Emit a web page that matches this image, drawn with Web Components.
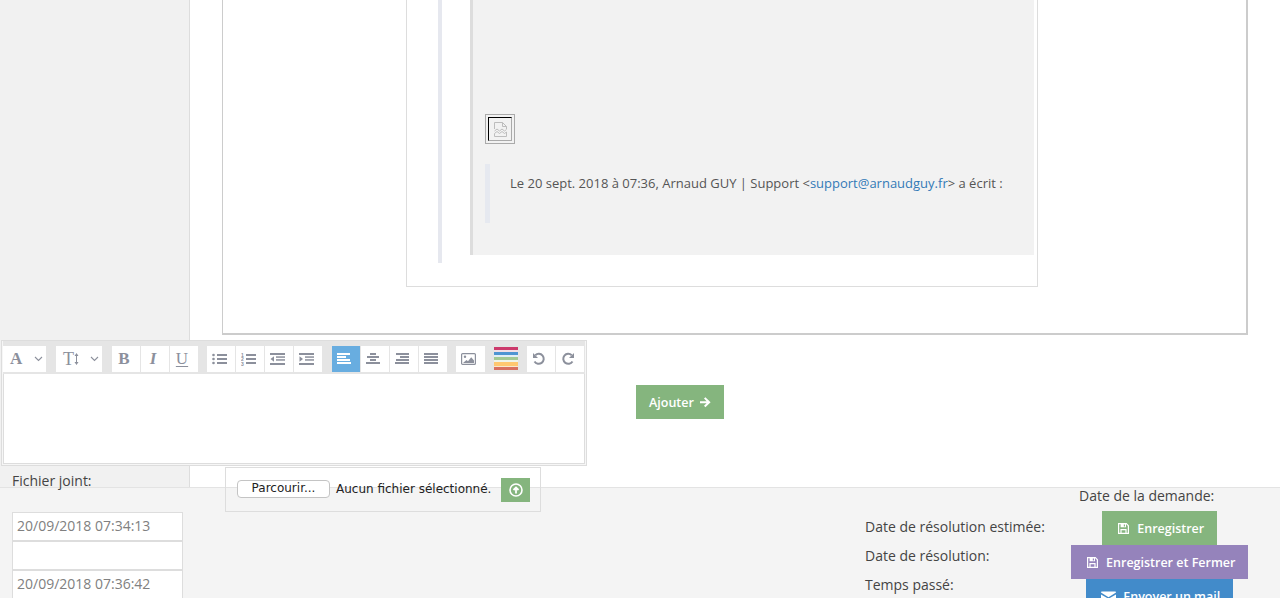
<!DOCTYPE html>
<html lang="fr">
<head>
<meta charset="utf-8">
<title>Demande</title>
<style>
  html, body { margin: 0; height: 598px; overflow: hidden; background: #fff; }
  body { font: 14px/18px "Open Sans", sans-serif; color: #444; }
</style>
</head>
<body>
<app-page>
  <ticket-message slot="message">
    Le 20 sept. 2018 à 07:36, Arnaud GUY | Support &lt;<a>support@arnaudguy.fr</a>&gt; a écrit :
  </ticket-message>
  <rich-editor slot="editor"></rich-editor>
  <ds-action slot="add" color="#85b57e" icon="arrow" trailing>Ajouter</ds-action>
  <file-box slot="file"></file-box>
  <ticket-footer slot="footer">
    <ds-action slot="actions" color="#85b57e" icon="save">Enregistrer</ds-action>
    <ds-action slot="actions" color="#9583bb" icon="save">Enregistrer et Fermer</ds-action>
    <ds-action slot="actions" color="#428bca" icon="mail">Envoyer un mail</ds-action>
  </ticket-footer>
</app-page>

<script>
// Petit utilitaire : attache le shadow root et y pose le markup
function mount(el, html) {
  el.attachShadow({ mode: 'open' }).innerHTML = html;
}

const ICONS = {
  arrow: { w: 12, d: '<path d="M0 5.200h6.600L4 2.600 5.400 1.200 10.600 6.200 5.400 11.200 4 9.800 6.600 7.200H0z"/>' },
  save: { w: 13, d: '<path fill-rule="evenodd" d="M1 1h8.600L12 3.400V12H1zM2.200 2.200v8.600h1.200V7h6.200v3.800h1.200V3.900L9.200 2.200H9v3H3.600v-3zM4.600 8.200v2.600h3.800V8.200zM6.800 2.400v2h1.200v-2z"/>' },
  mail: { w: 15, d: '<path d="M0 2.600C0 2 .5 1.600 1 1.600h13c.6 0 1 .4 1 1L7.500 7.200zM0 4.400l7.500 4.400L15 4.400V10.600c0 .6-.4 1-1 1H1c-.5 0-1-.4-1-1z"/>' }
};

// Page : barre latérale en fond, message, éditeur, pied
class AppPage extends HTMLElement {
  constructor() {
    super();
    mount(this, `
      <style>
        :host { display: block; width: 1280px; height: 598px; overflow: hidden; }
        .top {
          display: grid;
          grid-template-columns: 190px 1fr;
          grid-template-rows: 335px 5px 127px 20px;
          height: 487px;
        }
        .side { grid-column: 1; grid-row: 1 / -1; background: #f1f1f1; border-right: 1px solid #ddd; }
        .msg { grid-column: 2; grid-row: 1; padding-left: 32px; }
        .edit { grid-column: 1 / -1; grid-row: 3; display: flex; align-items: flex-start; }
        .add { margin: 45px 0 0 49px; }
        .file { grid-column: 1 / -1; grid-row: 4; display: flex; align-items: flex-start; }
        .file span { width: 225px; box-sizing: border-box; padding-left: 12px; line-height: 28px; }
        .file div { position: relative; z-index: 1; }
      </style>
      <div class="top">
        <div class="side"></div>
        <div class="msg"><slot name="message"></slot></div>
        <div class="edit">
          <slot name="editor"></slot>
          <div class="add"><slot name="add"></slot></div>
        </div>
        <div class="file">
          <span>Fichier joint:</span>
          <div><slot name="file"></slot></div>
        </div>
      </div>
      <slot name="footer"></slot>
    `);
  }
}

// Message cité, le haut est coupé par le défilement
class TicketMessage extends HTMLElement {
  constructor() {
    super();
    mount(this, `
      <style>
        :host { display: block; width: 1026px; height: 335px; box-sizing: border-box;
                border: solid #ccc; border-width: 0 2px 2px 1px; padding-left: 183px; }
        .inner { width: 632px; height: 287px; box-sizing: border-box;
                 border: solid #ddd; border-width: 0 1px 1px 1px; padding-left: 31px; }
        .outer { height: 263px; box-sizing: border-box; border-left: 4px solid #e6e8ef; padding-left: 28px; }
        .grey { width: 564px; height: 255px; box-sizing: border-box; background: #f2f2f2;
                border-left: 3px solid #ddd; padding: 114px 0 0 12px; }
        .broken { width: 30px; height: 30px; box-sizing: border-box; border: 1px solid #aaa; padding: 2px; }
        .broken div { height: 100%; box-sizing: border-box; border: 1px solid; border-color: #000 #aaa #aaa #000;
                      display: flex; align-items: center; justify-content: center; }
        .quote { margin-top: 20px; height: 59px; box-sizing: border-box; border-left: 5px solid #e6e9f0;
                 padding: 10px 0 0 20px; color: #555; white-space: nowrap; font-size: 13px; }
        ::slotted(*) { color: #337ab7; }
      </style>
      <div class="inner"><div class="outer"><div class="grey">
        <div class="broken"><div>
          <svg width="13" height="15" viewBox="0 0 13 15" fill="none" stroke="#bdbdbd" stroke-width="1">
            <path d="M.5 7V.5H8.500L12.500 4.500V7M8.500 .5V4.500H12.500"/>
            <path d="M.5 9L3 7 5.500 9 8 7 10.500 9 12.500 7.500"/>
            <path d="M.5 11.500L3 9.500 5.500 11.500 8 9.500 10.500 11.500 12.500 10V14.500H.5z"/>
          </svg>
        </div></div>
        <div class="quote"><slot></slot></div>
      </div></div></div>
    `);
  }
}

// Bouton de la barre d'outils
class ToolButton extends HTMLElement {
  constructor() {
    super();
    mount(this, `
      <style>
        :host { display: flex; align-items: center; justify-content: center; width: 28px; height: 26px;
                box-sizing: border-box; padding-right: 4px;
                background: #fff; color: #8c909c; margin-right: 1px;
                font: bold 17px/26px "Liberation Serif", serif; }
        :host([wide]) { justify-content: flex-start; padding: 0 0 0 7px; }
        :host([active]) { background: #68ade0; color: #fff; padding-right: 2px; }
        :host([italic]) { font-style: italic; }
        :host([under]) { text-decoration: underline; font-weight: normal; text-underline-offset: 2px; }
      </style>
      <slot></slot>
    `);
  }
}

// Éditeur riche : barre d'outils + zone de saisie vide
class RichEditor extends HTMLElement {
  constructor() {
    super();
    const lines = rows => `<svg width="16" height="12" viewBox="0 0 16 12" fill="currentColor">${
      rows.map(([x, w], i) => `<rect x="${x}" y="${i * 3}" width="${w}" height="2"/>`).join('')}</svg>`;
    const caret = `<svg style="margin-left:auto;margin-right:3px" width="9" height="6" viewBox="0 0 9 6" fill="none" stroke="#8c909c" stroke-width="1.100"><path d="M1 1l3.500 3.500L8 1"/></svg>`;
    mount(this, `
      <style>
        :host { display: block; margin-left: 1px; width: 586px; height: 126px; box-sizing: border-box;
                border: 1px solid #ddd; padding: 0 1px 1px; background: #f6f6f6; }
        .bar { display: flex; height: 33px; box-sizing: border-box; background: #e5e5e5; padding: 5px 0 0; }
        .group { display: flex; margin-right: 8px; }
        .group.g9 { margin-right: 9px; }
        .area { height: 90px; box-sizing: border-box; background: #fff; border: 1px solid #ddd; border-top: 0; }
        tool-button[wide] { width: 43px; }
        .size { width: 46px !important; }
        .tt { font-weight: normal; font-size: 18px; }
        .colors { width: 24px; height: 24px; margin: 1px 9px 0 0; display: flex; flex-direction: column; }
        .colors i { display: block; flex: none; }
      </style>
      <div class="bar">
        <div class="group g9"><tool-button wide>A${caret}</tool-button></div>
        <div class="group g9"><tool-button wide class="size"><span class="tt">T</span>
          <svg width="5" height="12" viewBox="0 0 5 12" fill="#8c909c"><path d="M2.500 0L4.500 3H3V9H4.500L2.500 12 .5 9H2V3H.5z"/></svg>${caret}</tool-button></div>
        <div class="group">
          <tool-button>B</tool-button>
          <tool-button italic>I</tool-button>
          <tool-button under>U</tool-button>
        </div>
        <div class="group g9">
          <tool-button><svg width="15" height="12" viewBox="0 0 15 12" fill="currentColor">
            <circle cx="1.500" cy="2" r="1.300"/><circle cx="1.500" cy="6" r="1.300"/><circle cx="1.500" cy="10" r="1.300"/>
            <rect x="5" y="1" width="10" height="2"/><rect x="5" y="5" width="10" height="2"/><rect x="5" y="9" width="10" height="2"/></svg></tool-button>
          <tool-button><svg width="15" height="14" viewBox="0 0 15 14" fill="currentColor">
            <text x="0" y="4.500" font-size="5" font-family="Liberation Sans">1</text><text x="0" y="9" font-size="5" font-family="Liberation Sans">2</text><text x="0" y="13.500" font-size="5" font-family="Liberation Sans">3</text>
            <rect x="5" y="2" width="10" height="2"/><rect x="5" y="6" width="10" height="2"/><rect x="5" y="10" width="10" height="2"/></svg></tool-button>
          <tool-button><svg width="15" height="12" viewBox="0 0 15 12" fill="currentColor">
            <rect width="15" height="2"/><rect x="6" y="3.300" width="9" height="1.500"/><rect x="6" y="6.200" width="9" height="1.500"/><rect y="10" width="15" height="2"/><path d="M4 3.200v5.600L.5 6z"/></svg></tool-button>
          <tool-button><svg width="15" height="12" viewBox="0 0 15 12" fill="currentColor">
            <rect width="15" height="2"/><rect x="6" y="3.300" width="9" height="1.500"/><rect x="6" y="6.200" width="9" height="1.500"/><rect y="10" width="15" height="2"/><path d="M.5 3.200v5.600L4 6z"/></svg></tool-button>
        </div>
        <div class="group">
          <tool-button active>${lines([[0, 13], [0, 9], [0, 13], [0, 14]])}</tool-button>
          <tool-button>${lines([[5, 6], [2, 12], [5, 6], [1, 14]])}</tool-button>
          <tool-button>${lines([[2, 13], [6, 9], [2, 13], [1, 14]])}</tool-button>
          <tool-button>${lines([[1, 14], [1, 14], [1, 14], [1, 14]])}</tool-button>
        </div>
        <div class="group g9">
          <tool-button style="margin-right:0;width:29px"><svg width="15" height="12" viewBox="0 0 15 12">
            <rect x=".6" y=".6" width="13.800" height="10.800" rx="1" fill="none" stroke="currentColor" stroke-width="1.200"/>
            <circle cx="4" cy="3.800" r="1.200" fill="currentColor"/>
            <path d="M2 10l3.500-3 1.500 1.200 3.200-4L13 7.500V10z" fill="currentColor"/></svg></tool-button>
        </div>
        <div class="colors">
          <i style="height:3px;background:#cc3a6c"></i><i style="height:2px;background:#f3dfe6"></i>
          <i style="height:3px;background:#4f95d2"></i><i style="height:2px;background:#e2eef6"></i>
          <i style="height:3px;background:#a3c994"></i><i style="height:2px;background:#eef4ea"></i>
          <i style="height:4px;background:#ffc870"></i><i style="height:1px;background:#f8e8cc"></i>
          <i style="height:3px;background:#d87060"></i>
        </div>
        <div class="group" style="margin:0">
          <tool-button><svg width="14" height="14" viewBox="0 0 14 14" fill="none" stroke="currentColor" stroke-width="2"><path d="M3.300 3.200A5 5 0 1 1 2.500 9.500"/><path d="M1 1v5h5" fill="currentColor" stroke="none"/></svg></tool-button>
          <tool-button><svg width="14" height="14" viewBox="0 0 14 14" fill="none" stroke="currentColor" stroke-width="2"><path d="M10.700 3.200A5 5 0 1 0 11.500 9.500"/><path d="M13 1v5H8" fill="currentColor" stroke="none"/></svg></tool-button>
        </div>
      </div>
      <div class="area"></div>
    `);
  }
}

// Bouton d'action coloré
class DsAction extends HTMLElement {
  constructor() {
    super();
    const { w, d } = ICONS[this.getAttribute('icon')];
    const icon = `<svg width="${w}" height="13" viewBox="0 0 ${w} 13" fill="#fff">${d}</svg>`;
    const trailing = this.hasAttribute('trailing');
    mount(this, `
      <style>
        :host { display: inline-flex; flex: none; align-items: center; gap: ${trailing ? 6 : 7}px; height: 34px;
                padding: 1px 12.500px 0 ${trailing ? 13 : 15}px;
                box-sizing: border-box; background: ${this.getAttribute('color')}; color: #fff;
                font: 600 12.500px/18px "Open Sans", sans-serif; white-space: nowrap; }
      </style>
      ${trailing ? '' : icon}<slot></slot>${trailing ? icon : ''}
    `);
  }
}

// Champ fichier + bouton d'envoi
class FileBox extends HTMLElement {
  constructor() {
    super();
    mount(this, `
      <style>
        :host { display: flex; align-items: center; width: 316px; height: 45px; box-sizing: border-box;
                border: 1px solid #ddd; padding: 0 10px 0 11px; color: #222;
                font: 12px/18px "DejaVu Sans", sans-serif; }
        .browse { width: 93px; height: 18px; box-sizing: border-box; background: #fff; border: 1px solid #c4c4c4;
                  border-radius: 4px; text-align: center; line-height: 15px; margin-top: -1px; }
        .name { margin: -2px 0 0 6px; white-space: nowrap; flex: 1; }
        .send { width: 29px; height: 24px; background: #85b57e; display: flex; align-items: center; justify-content: center; }
      </style>
      <div class="browse">Parcourir...</div>
      <div class="name">Aucun fichier sélectionné.</div>
      <div class="send">
        <svg width="14" height="14" viewBox="0 0 14 14" fill="none" stroke="#fff">
          <circle cx="7" cy="7" r="6" stroke-width="1.600"/>
          <path d="M7 10.500V4.500M4.500 7L7 4.500 9.500 7" stroke-width="1.800"/>
        </svg>
      </div>
    `);
  }
}

// Pied de page : dates, libellés, actions
class TicketFooter extends HTMLElement {
  constructor() {
    super();
    mount(this, `
      <style>
        :host { display: flex; height: 111px; box-sizing: border-box; background: #f4f4f4;
                border-top: 1px solid #e3e3e3; padding: 0 32px 0 12px; overflow: hidden; }
        .dates { width: 171px; padding-top: 24px; }
        .dates div { height: 29px; box-sizing: border-box; background: #fff; border: 1px solid #ddd;
                     padding-left: 4px; line-height: 25px; color: #808080; }
        .labels { margin-left: auto; width: 206px; padding-top: 24px; line-height: 29px; white-space: nowrap; }
        .actions { width: 177px; display: flex; flex-direction: column; align-items: center; }
        .demande { flex: none; align-self: flex-start; margin-left: 8px; height: 23px; line-height: 15px; white-space: nowrap; }
      </style>
      <div class="dates">
        <div>20/09/2018 07:34:13</div>
        <div></div>
        <div>20/09/2018 07:36:42</div>
      </div>
      <div class="labels">
        <div>Date de résolution estimée:</div>
        <div>Date de résolution:</div>
        <div>Temps passé:</div>
      </div>
      <div class="actions">
        <div class="demande">Date de la demande:</div>
        <slot name="actions"></slot>
      </div>
    `);
  }
}

customElements.define('app-page', AppPage);
customElements.define('ticket-message', TicketMessage);
customElements.define('tool-button', ToolButton);
customElements.define('rich-editor', RichEditor);
customElements.define('ds-action', DsAction);
customElements.define('file-box', FileBox);
customElements.define('ticket-footer', TicketFooter);
</script>
</body>
</html>
